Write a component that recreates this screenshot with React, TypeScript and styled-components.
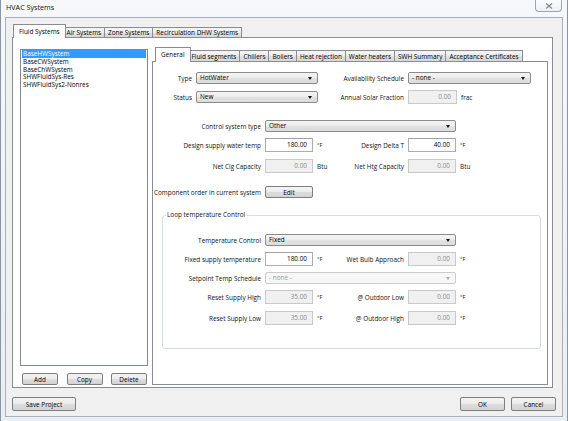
import React from "react";
import styled, { createGlobalStyle, css } from "styled-components";

const FONT = `"Open Sans", "Noto Sans", "Liberation Sans", sans-serif`;
const FS = 6.4;

const GlobalStyle = createGlobalStyle`
  * { box-sizing: border-box; }
  html, body { margin: 0; padding: 0; background: #dfe7ef; }
  body { font-family: ${FONT}; font-size: ${FS}px; color: #000; }
  #root { width: 568px; height: 421px; }
`;

const Window = styled.div`
  width: 568px;
  height: 421px;
  display: flex;
  flex-direction: column;
  padding: 0 4px 4px 4px;
  border-left: 1px solid #8a95a1;
  border-right: 1px solid #8a95a1;
  background: linear-gradient(180deg, #f6f8fb 0%, #eef2f6 60%, #e8eef4 100%);
`;

const TitleBar = styled.div`
  height: 17px;
  display: flex;
  justify-content: space-between;
  align-items: flex-start;
`;

const Title = styled.div`
  padding: 3px 0 0 1px;
  font-size: 7.2px;
  line-height: 9px;
  color: #111;
`;

const CloseButton = styled.div`
  width: 27px;
  height: 12px;
  margin-right: 1px;
  display: flex;
  align-items: center;
  justify-content: center;
  border: 1px solid #9aa5b0;
  border-top: none;
  border-radius: 0 0 4px 4px;
  background: linear-gradient(180deg, #fbfcfd 0%, #eef1f4 100%);
`;

const Client = styled.div`
  flex: 1;
  display: flex;
  flex-direction: column;
  padding: 6px 6px 5px 6px;
  border: 1px solid #a7b1bb;
  background: #f0f0f0;
`;

const TabWidget = styled.div<{ $mr?: number }>`
  flex: 1;
  display: flex;
  flex-direction: column;
  margin-right: ${(p) => p.$mr ?? 0}px;
  min-height: 0;
  min-width: 0;
`;

const TabBar = styled.div<{ $h: number; $pl: number }>`
  height: ${(p) => p.$h}px;
  display: flex;
  align-items: flex-end;
  padding-left: ${(p) => p.$pl}px;
  margin-bottom: -1px;
  position: relative;
  z-index: 1;
`;

const Tab = styled.div<{ $active?: boolean; $h: number }>`
  display: flex;
  align-items: center;
  justify-content: center;
  white-space: nowrap;
  padding: 0 3px;
  margin-right: -1px;
  border: 1px solid #898c95;
  color: #000;
  ${(p) =>
    p.$active
      ? css`
          height: ${p.$h}px;
          border-bottom: none;
          background: #ffffff;
          margin-left: -2px;
          margin-right: -3px;
          padding: 0 5px 1px 5px;
          position: relative;
          z-index: 2;
        `
      : css`
          height: ${p.$h - 3}px;
          background: linear-gradient(180deg, #f5f5f5 0%, #ececec 50%, #e0e0e0 51%, #d8d8d8 100%);
        `}
`;

const Pane = styled.div`
  flex: 1;
  min-height: 0;
  border: 1px solid #898c95;
  background: #ffffff;
`;

const OuterPane = styled(Pane)`
  display: flex;
  gap: 4px;
  padding: 9px 4px 2px 7px;
`;

const InnerPane = styled(Pane)`
  display: flex;
  flex-direction: column;
`;

const LeftCol = styled.div`
  width: 128px;
  flex: none;
  display: flex;
  flex-direction: column;
  margin-top: 2px;
`;

const ListBox = styled.div`
  flex: 1;
  border: 1px solid #828790;
  background: #fff;
  padding: 0 1px;
`;

const ListItem = styled.div<{ $selected?: boolean }>`
  height: 7.8px;
  line-height: 7.8px;
  padding-left: 1px;
  white-space: nowrap;
  ${(p) =>
    p.$selected &&
    css`
      background: #3399ff;
      color: #ffffff;
    `}
`;

const ButtonRow = styled.div`
  display: flex;
  justify-content: space-between;
  margin-top: 7px;
  padding: 0 1px 0 2px;
`;

const PushButton = styled.div<{ $w: number; $h?: number }>`
  width: ${(p) => p.$w}px;
  height: ${(p) => p.$h ?? 12}px;
  display: flex;
  align-items: center;
  justify-content: center;
  border: 1px solid #7e7e7e;
  border-radius: 2px;
  background: linear-gradient(180deg, #f4f4f4 0%, #ececec 45%, #dedede 50%, #d2d2d2 100%);
  color: #000;
  white-space: nowrap;
`;

const TopRow = styled.div<{ $mt: number }>`
  display: grid;
  grid-template-columns: 39px 122px 82px 49px 70px;
  column-gap: 4px;
  align-items: center;
  height: 14px;
  margin-top: ${(p) => p.$mt}px;
`;

const Row = styled.div<{ $lead: number; $mt: number }>`
  display: grid;
  grid-template-columns: ${(p) => p.$lead}px 48px 17px 66px 48px auto;
  column-gap: 4px;
  align-items: center;
  height: 14px;
  margin-top: ${(p) => p.$mt}px;
`;

const Label = styled.div`
  display: flex;
  justify-content: flex-end;
  white-space: nowrap;
  color: #111;
`;

const Unit = styled.div<{ $small?: boolean }>`
  white-space: nowrap;
  color: #111;
  font-size: ${(p) => (p.$small ? 5.6 : FS)}px;
`;

const Field = styled.div<{ $disabled?: boolean }>`
  height: 14px;
  line-height: 12px;
  padding-right: 5px;
  text-align: right;
  border: 1px solid #abadb3;
  border-top-color: #9ea1a8;
  background: #ffffff;
  color: #000;
  ${(p) =>
    p.$disabled &&
    css`
      background: #f0f0f0;
      border-color: #c8c9cb;
      color: #8c8c8c;
    `}
`;

const Combo = styled.div<{ $disabled?: boolean; $span: string }>`
  grid-column: ${(p) => p.$span};
  position: relative;
  height: 12px;
  line-height: 10px;
  padding-left: 3px;
  border: 1px solid #8b8b8b;
  border-radius: 2px;
  background: linear-gradient(180deg, #f4f4f4 0%, #ececec 50%, #e2e2e2 51%, #dcdcdc 100%);
  color: #000;
  white-space: nowrap;
  &::after {
    content: "";
    position: absolute;
    right: 5px;
    top: 4px;
    border-left: 2.5px solid transparent;
    border-right: 2.5px solid transparent;
    border-top: 3px solid #111;
  }
  ${(p) =>
    p.$disabled &&
    css`
      background: #f7f7f7;
      border-color: #c9cbcd;
      color: #9a9a9a;
      &::after {
        border-top-color: #a8a8a8;
      }
    `}
`;

const Group = styled.fieldset`
  margin: 12px 6px 0 9px;
  padding: 0 0 23px 0;
  border: 1px solid #d5dde3;
  border-radius: 3px;
  min-width: 0;
`;

const Legend = styled.legend`
  margin-left: 3px;
  padding: 0 1px;
  line-height: 8px;
  font-size: ${FS}px;
  color: #111;
`;

const BottomBar = styled.div`
  display: flex;
  justify-content: space-between;
  margin-top: 9px;
  height: 14px;
`;

const RightButtons = styled.div`
  display: flex;
  gap: 6px;
`;

const DEG = "°F";

export default function App() {
  const outerTabs = ["Fluid Systems", "Air Systems", "Zone Systems", "Recirculation DHW Systems"];
  const innerTabs = [
    "General",
    "Fluid segments",
    "Chillers",
    "Boilers",
    "Heat rejection",
    "Water heaters",
    "SWH Summary",
    "Acceptance Certificates",
  ];
  const systems = ["BaseHWSystem", "BaseCWSystem", "BaseChWSystem", "SHWFluidSys-Res", "SHWFluidSys2-Nonres"];

  return (
    <>
      <GlobalStyle />
      <Window>
        <TitleBar>
          <Title>HVAC Systems</Title>
          <CloseButton>
            <svg width="8" height="6" viewBox="0 0 8 6">
              <path d="M1 0.5 L7 5.5 M7 0.5 L1 5.5" stroke="#7d8791" strokeWidth="1.2" />
            </svg>
          </CloseButton>
        </TitleBar>
        <Client>
          <TabWidget $mr={3}>
            <TabBar $h={14} $pl={3}>
              {outerTabs.map((t, i) => (
                <Tab key={t} $h={14} $active={i === 0}>
                  {t}
                </Tab>
              ))}
            </TabBar>
            <OuterPane>
              <LeftCol>
                <ListBox>
                  {systems.map((s, i) => (
                    <ListItem key={s} $selected={i === 0}>
                      {s}
                    </ListItem>
                  ))}
                </ListBox>
                <ButtonRow>
                  <PushButton $w={36}>Add</PushButton>
                  <PushButton $w={36}>Copy</PushButton>
                  <PushButton $w={36}>Delete</PushButton>
                </ButtonRow>
              </LeftCol>
              <TabWidget>
                <TabBar $h={15} $pl={5}>
                  {innerTabs.map((t, i) => (
                    <Tab key={t} $h={15} $active={i === 0}>
                      {t}
                    </Tab>
                  ))}
                </TabBar>
                <InnerPane>
                  <TopRow $mt={9}>
                    <Label>Type</Label>
                    <Combo $span="2">HotWater</Combo>
                    <Label>Availability Schedule</Label>
                    <Combo $span="4 / 6">- none -</Combo>
                  </TopRow>
                  <TopRow $mt={5}>
                    <Label>Status</Label>
                    <Combo $span="2">New</Combo>
                    <Label>Annual Solar Fraction</Label>
                    <Field $disabled>0.00</Field>
                    <Unit>frac</Unit>
                  </TopRow>

                  <Row $lead={108} $mt={15}>
                    <Label>Control system type</Label>
                    <Combo $span="2 / 6">Other</Combo>
                  </Row>
                  <Row $lead={108} $mt={5}>
                    <Label>Design supply water temp</Label>
                    <Field>180.00</Field>
                    <Unit $small>{DEG}</Unit>
                    <Label>Design Delta T</Label>
                    <Field>40.00</Field>
                    <Unit $small>{DEG}</Unit>
                  </Row>
                  <Row $lead={108} $mt={7}>
                    <Label>Net Clg Capacity</Label>
                    <Field $disabled>0.00</Field>
                    <Unit>Btu</Unit>
                    <Label>Net Htg Capacity</Label>
                    <Field $disabled>0.00</Field>
                    <Unit>Btu</Unit>
                  </Row>
                  <Row $lead={108} $mt={12}>
                    <Label>Component order in current system</Label>
                    <PushButton $w={48}>Edit</PushButton>
                  </Row>

                  <Group>
                    <Legend>Loop temperature Control</Legend>
                    <Row $lead={98} $mt={14}>
                      <Label>Temperature Control</Label>
                      <Combo $span="2 / 6">Fixed</Combo>
                    </Row>
                    <Row $lead={98} $mt={5}>
                      <Label>Fixed supply temperature</Label>
                      <Field>180.00</Field>
                      <Unit $small>{DEG}</Unit>
                      <Label>Wet Bulb Approach</Label>
                      <Field $disabled>0.00</Field>
                      <Unit $small>{DEG}</Unit>
                    </Row>
                    <Row $lead={98} $mt={5}>
                      <Label>Setpoint Temp Schedule</Label>
                      <Combo $span="2 / 6" $disabled>
                        - none -
                      </Combo>
                    </Row>
                    <Row $lead={98} $mt={5}>
                      <Label>Reset Supply High</Label>
                      <Field $disabled>35.00</Field>
                      <Unit $small>{DEG}</Unit>
                      <Label>@ Outdoor Low</Label>
                      <Field $disabled>0.00</Field>
                      <Unit $small>{DEG}</Unit>
                    </Row>
                    <Row $lead={98} $mt={7}>
                      <Label>Reset Supply Low</Label>
                      <Field $disabled>35.00</Field>
                      <Unit $small>{DEG}</Unit>
                      <Label>@ Outdoor High</Label>
                      <Field $disabled>0.00</Field>
                      <Unit $small>{DEG}</Unit>
                    </Row>
                  </Group>
                </InnerPane>
              </TabWidget>
            </OuterPane>
          </TabWidget>
          <BottomBar>
            <PushButton $w={64} $h={14}>
              Save Project
            </PushButton>
            <RightButtons>
              <PushButton $w={45} $h={14}>
                OK
              </PushButton>
              <PushButton $w={45} $h={14}>
                Cancel
              </PushButton>
            </RightButtons>
          </BottomBar>
        </Client>
      </Window>
    </>
  );
}
